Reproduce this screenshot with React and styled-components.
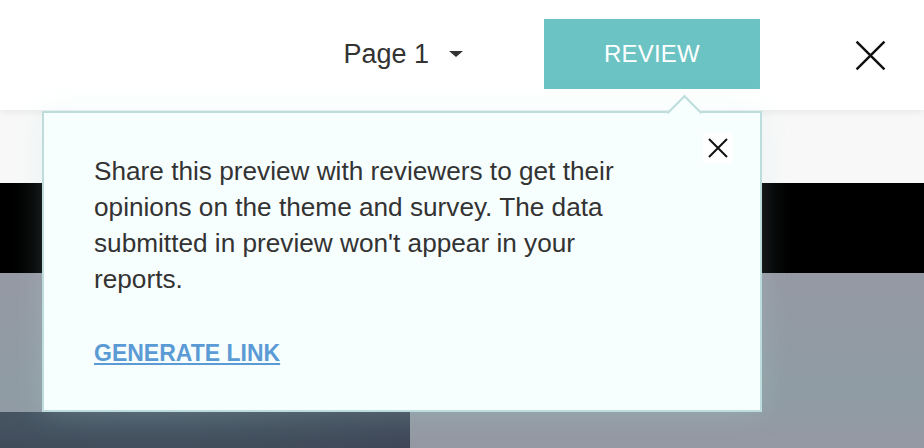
import React from "react";
import styled, { createGlobalStyle } from "styled-components";

const GlobalStyle = createGlobalStyle`
  html, body {
    margin: 0;
    padding: 0;
    background: #969aa5;
    overflow: hidden;
  }
  body {
    font-family: "Liberation Sans", Arial, Helvetica, sans-serif;
    color: #333;
  }
`;

const Page = styled.div`
  position: relative;
  width: 924px;
  height: 448px;
  display: flex;
  flex-direction: column;
  overflow: hidden;
`;

const Header = styled.header`
  position: relative;
  z-index: 2;
  height: 110px;
  flex: none;
  display: flex;
  align-items: center;
  justify-content: flex-end;
  padding-right: 38px;
  background: #fff;
  box-shadow: 0 2px 8px rgba(0, 0, 0, 0.07);
`;

const PageSelect = styled.button`
  display: flex;
  align-items: center;
  gap: 20px;
  border: 0;
  background: none;
  padding: 0;
  font-family: inherit;
  font-size: 27px;
  color: #333;
  cursor: pointer;
  margin-right: 81px;
  margin-top: -2px;
`;

const Caret = styled.span`
  width: 0;
  height: 0;
  border-left: 7.5px solid transparent;
  border-right: 7.5px solid transparent;
  border-top: 6px solid #333;
`;

const ReviewButton = styled.button`
  width: 216px;
  height: 70px;
  border: 0;
  background: #6bc3c3;
  color: #fff;
  font-family: inherit;
  font-size: 24px;
  letter-spacing: 0.2px;
  cursor: pointer;
  margin-top: -2px;
  margin-right: 95px;
`;

const IconButton = styled.button`
  display: flex;
  align-items: center;
  justify-content: center;
  width: ${(p) => p.$size}px;
  height: ${(p) => p.$size}px;
  padding: 0;
  border: 0;
  background: ${(p) => p.$bg || "none"};
  cursor: pointer;
`;

const Canvas = styled.main`
  flex: 1;
  display: flex;
  flex-direction: column;
`;

const LightStrip = styled.div`
  height: 73px;
  background: #f8f8f8;
`;

const Banner = styled.div`
  height: 90px;
  background: #000;
`;

const Body = styled.div`
  flex: 1;
  display: flex;
  align-items: flex-end;
  background: linear-gradient(180deg, #9599a4 0%, #8f9ca3 70%, #9598a3 100%);
`;

const Picture = styled.div`
  width: 410px;
  height: 36px;
  background: radial-gradient(ellipse at 35% 0%, #4a5b68 0%, #44515f 50%, #3f4757 100%);
`;

const Popover = styled.div`
  position: absolute;
  z-index: 3;
  top: 111px;
  left: 42px;
  width: 720px;
  height: 301px;
  box-sizing: border-box;
  padding: 40px 60px 0 50px;
  background: #f7fefe;
  border: 2px solid #bddcdc;
  box-shadow: 0 0 28px rgba(190, 230, 230, 0.22);
`;

const Arrow = styled.span`
  position: absolute;
  top: -13px;
  left: 628px;
  width: 23px;
  height: 23px;
  background: #f7fefe;
  border-top: 2px solid #bddcdc;
  border-left: 2px solid #bddcdc;
  transform: rotate(45deg);
`;

const CloseSpot = styled.div`
  position: absolute;
  top: 20px;
  right: 27px;
`;

const Message = styled.p`
  margin: 0;
  max-width: 545px;
  font-size: 26.2px;
  line-height: 36px;
  color: #333;
`;

const GenerateLink = styled.a`
  display: inline-block;
  margin-top: 43px;
  font-size: 23px;
  line-height: 26px;
  font-weight: bold;
  color: #5b9bd5;
  text-decoration: underline;
  text-underline-offset: 2px;
  cursor: pointer;
`;

const Cross = ({ size, stroke }) => (
  <svg width={size} height={size} viewBox="0 0 20 20" fill="none">
    <path d="M1 1L19 19M19 1L1 19" stroke="#111" strokeWidth={stroke} />
  </svg>
);

const App = () => {
  return (
    <Page>
      <GlobalStyle />
      <Header>
        <PageSelect>
          Page 1
          <Caret />
        </PageSelect>
        <ReviewButton>REVIEW</ReviewButton>
        <IconButton $size={31} aria-label="Close">
          <Cross size={31} stroke={1.6} />
        </IconButton>
      </Header>
      <Canvas>
        <LightStrip />
        <Banner />
        <Body>
          <Picture />
        </Body>
      </Canvas>
      <Popover>
        <Arrow />
        <CloseSpot>
          <IconButton $size={30} $bg="#fff" aria-label="Dismiss">
            <Cross size={20} stroke={2} />
          </IconButton>
        </CloseSpot>
        <Message>
          Share this preview with reviewers to get their opinions on the theme and survey. The data
          submitted in preview won't appear in your reports.
        </Message>
        <GenerateLink>GENERATE LINK</GenerateLink>
      </Popover>
    </Page>
  );
};

export default App;
